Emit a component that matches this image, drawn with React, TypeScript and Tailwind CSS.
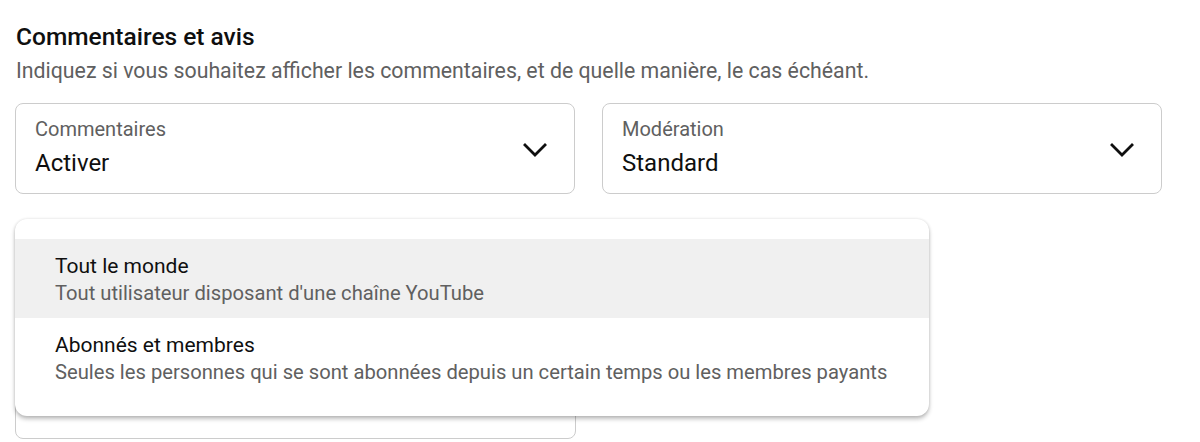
function Chevron() {
  return (
    <svg width="24" height="14" viewBox="0 0 24 14" fill="none" className="shrink-0">
      <path d="M2 2 L12 12 L22 2" stroke="#0f0f0f" strokeWidth="2.8" strokeLinecap="square" strokeLinejoin="miter" />
    </svg>
  );
}

function SelectBox({ label, value }: { label?: string; value?: string }) {
  return (
    <div className="relative h-[91px] rounded-lg border border-[#cccccc] bg-white pl-[19px] pr-[28px] pt-[13px]">
      {label && (
        <div className="flex flex-col">
          <span className="text-[20px] leading-[24px] text-[#606060]">{label}</span>
          <span className="mt-[8px] text-[24px] leading-[28px] text-[#0f0f0f]">{value}</span>
        </div>
      )}
      <div className="absolute right-[27px] top-[39px]">
        <Chevron />
      </div>
    </div>
  );
}

const options = [
  { title: 'Tout le monde', desc: "Tout utilisateur disposant d'une chaîne YouTube", active: true },
  {
    title: 'Abonnés et membres',
    desc: 'Seules les personnes qui se sont abonnées depuis un certain temps ou les membres payants',
    active: false,
  },
];

export default function App() {
  return (
    <div className="relative h-[442px] w-[1200px] overflow-hidden bg-white font-['Roboto',sans-serif]">
      <div className="pl-[15px] pr-[38px] pt-[23px]">
        <h2 className="pl-px text-[24.5px] font-medium leading-[28px] text-[#0f0f0f]">Commentaires et avis</h2>
        <p className="mt-[6px] pl-px text-[21.3px] leading-[28px] text-[#606060]">
          Indiquez si vous souhaitez afficher les commentaires, et de quelle manière, le cas échéant.
        </p>
        <div className="mt-[18px] grid grid-cols-2 gap-[27px]">
          <SelectBox label="Commentaires" value="Activer" />
          <SelectBox label="Modération" value="Standard" />
        </div>
        {/* third select sits behind the open menu */}
        <div className="mt-[154px] w-[561px]">
          <SelectBox />
        </div>
      </div>

      <div className="absolute left-[15px] top-[219px] w-[914px] rounded-xl bg-white pb-[19px] pt-5 shadow-[0_3px_4px_rgba(0,0,0,0.25),0_0_3px_rgba(0,0,0,0.12)]">
        {options.map((o) => (
          <div key={o.title} className={`h-[79px] px-10 pt-[14px] ${o.active ? 'bg-[#f0f0f0]' : ''}`}>
            <div className="text-[21px] leading-[26px] text-[#0f0f0f]">{o.title}</div>
            <div className="mt-[2px] text-[20.2px] leading-[24px] text-[#606060]">{o.desc}</div>
          </div>
        ))}
      </div>
    </div>
  );
}
